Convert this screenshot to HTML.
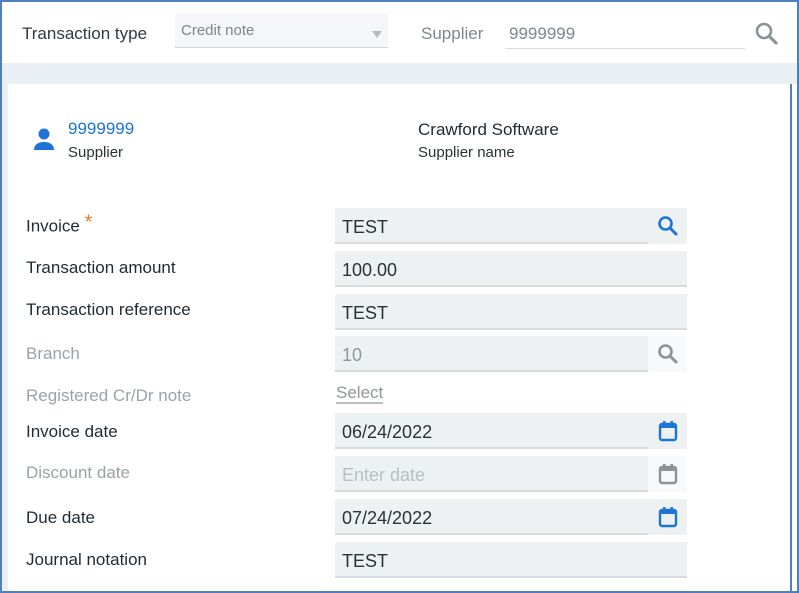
<!DOCTYPE html>
<html><head><style>
*{margin:0;padding:0;box-sizing:border-box}
body{width:799px;height:593px;position:relative;background:#fff;font-family:"Liberation Sans",sans-serif;overflow:hidden}
.frame{position:absolute;left:0;top:0;width:799px;height:593px;border:2px solid #4f7fbf;}
.a{position:absolute;white-space:nowrap}
.lbl{position:absolute;left:26px;font-size:17px;color:#1f2a33;transform:translateY(-50%)}
.dis{color:#9aa3a8}
.fld{position:absolute;left:335px;width:352px;height:36px;background:#edf1f2;border-bottom:2px solid #d6dbde;font-size:18px;color:#2b3236;padding:9px 0 0 7px}
.ic{position:absolute;left:648px;width:39px;height:36px;background:#edf1f2;display:flex;align-items:center;justify-content:center}
</style></head><body>
<div class="a" style="left:2px;top:2px;width:795px;height:61px;background:#fff"></div>
<div class="a" style="left:2px;top:63px;width:795px;height:21px;background:#e9eff2"></div>
<div class="a" style="left:2px;top:84px;width:6px;height:507px;background:#e9eff2"></div>
<div class="a" style="left:790px;top:84px;width:7px;height:507px;background:#fff;border-left:2px solid #4f7fbf"></div>

<div class="a" style="left:22px;top:24px;font-size:17px;color:#2f3a40">Transaction type</div>
<div class="a" style="left:175px;top:13px;width:213px;height:35px;background:#f4f6f7;border-bottom:1px solid #d0d5d8"></div>
<div class="a" style="left:181px;top:22px;font-size:15px;color:#7d868b">Credit note</div>
<div class="a" style="left:372px;top:31px;width:0;height:0;border-left:5px solid transparent;border-right:5px solid transparent;border-top:7px solid #b5bcc0"></div>
<div class="a" style="left:421px;top:24px;font-size:17px;color:#7d878c">Supplier</div>
<div class="a" style="left:505px;top:13px;width:240px;height:36px;border-bottom:1px solid #d6dbde"></div>
<div class="a" style="left:509px;top:24px;font-size:17px;color:#7d868b">9999999</div>
<svg class="a" style="left:754px;top:21px" width="26" height="26" viewBox="0 0 26 26"><circle cx="10" cy="10" r="7" fill="none" stroke="#8a9398" stroke-width="2.6"/><path d="M15 15l7 7" stroke="#8a9398" stroke-width="3.2" stroke-linecap="round"/></svg>

<svg class="a" style="left:32px;top:128px" width="26" height="24" viewBox="0 0 26 24"><circle cx="12" cy="6" r="5.5" fill="#1b74d6"/><path d="M2 22c0-6 5-8 10-8s10 2 10 8z" fill="#1b74d6"/></svg>
<div class="a" style="left:68px;top:119px;font-size:17px;color:#1b74d6">9999999</div>
<div class="a" style="left:68px;top:144px;font-size:15px;color:#2b3236">Supplier</div>
<div class="a" style="left:418px;top:120px;font-size:17px;color:#1f2a33">Crawford Software</div>
<div class="a" style="left:418px;top:144px;font-size:15px;color:#2b3236">Supplier name</div>

<div class="lbl" style="top:226px">Invoice <span style="color:#f07b22;font-size:20px;position:relative;top:-3px">*</span></div>
<div class="lbl" style="top:268px">Transaction amount</div>
<div class="lbl" style="top:310px">Transaction reference</div>
<div class="lbl dis" style="top:354px">Branch</div>
<div class="lbl dis" style="top:396px">Registered Cr/Dr note</div>
<div class="lbl" style="top:432px">Invoice date</div>
<div class="lbl dis" style="top:473px">Discount date</div>
<div class="lbl" style="top:518px">Due date</div>
<div class="lbl" style="top:560px">Journal notation</div>

<div class="fld" style="top:208px">TEST</div>
<div class="ic" style="top:208px;background:#edf1f2"><svg width="24" height="24" viewBox="0 0 24 24"><circle cx="9.5" cy="9.5" r="6" fill="none" stroke="#1b74d6" stroke-width="2.6"/><path d="M14 14l6 6" stroke="#1b74d6" stroke-width="3" stroke-linecap="round"/></svg></div>
<div class="fld" style="top:251px">100.00</div>
<div class="fld" style="top:294px">TEST</div>
<div class="fld" style="top:336px;width:313px;color:#8d969b">10</div>
<div class="ic" style="top:336px;background:#f8f9fa"><svg width="24" height="24" viewBox="0 0 24 24"><circle cx="9.5" cy="9.5" r="6" fill="none" stroke="#8a9398" stroke-width="2.6"/><path d="M14 14l6 6" stroke="#8a9398" stroke-width="3" stroke-linecap="round"/></svg></div>
<div class="a" style="left:336px;top:384px;font-size:17px;color:#8d969b;border-bottom:2px solid #b9c0c4;line-height:18px">Select</div>

<div class="fld" style="top:413px;width:317px">06/24/2022</div>
<div class="ic" style="top:413px"><svg width="20" height="22" viewBox="0 0 20 22"><rect x="2" y="4" width="16" height="16" rx="2" fill="none" stroke="#1b74d6" stroke-width="2.4"/><rect x="2" y="4" width="16" height="4" fill="#1b74d6"/><rect x="5" y="1" width="2.5" height="4" fill="#1b74d6"/><rect x="12.5" y="1" width="2.5" height="4" fill="#1b74d6"/></svg></div>
<div class="fld" style="top:456px;width:317px;color:#b8c0c4">Enter date</div>
<div class="ic" style="top:456px;background:#f8f9fa"><svg width="20" height="22" viewBox="0 0 20 22"><rect x="2" y="4" width="16" height="16" rx="2" fill="none" stroke="#8a9398" stroke-width="2.4"/><rect x="2" y="4" width="16" height="4" fill="#8a9398"/><rect x="5" y="1" width="2.5" height="4" fill="#8a9398"/><rect x="12.5" y="1" width="2.5" height="4" fill="#8a9398"/></svg></div>
<div class="fld" style="top:499px;width:317px">07/24/2022</div>
<div class="ic" style="top:499px"><svg width="20" height="22" viewBox="0 0 20 22"><rect x="2" y="4" width="16" height="16" rx="2" fill="none" stroke="#1b74d6" stroke-width="2.4"/><rect x="2" y="4" width="16" height="4" fill="#1b74d6"/><rect x="5" y="1" width="2.5" height="4" fill="#1b74d6"/><rect x="12.5" y="1" width="2.5" height="4" fill="#1b74d6"/></svg></div>
<div class="fld" style="top:542px">TEST</div>

<div class="frame"></div>
</body></html>
